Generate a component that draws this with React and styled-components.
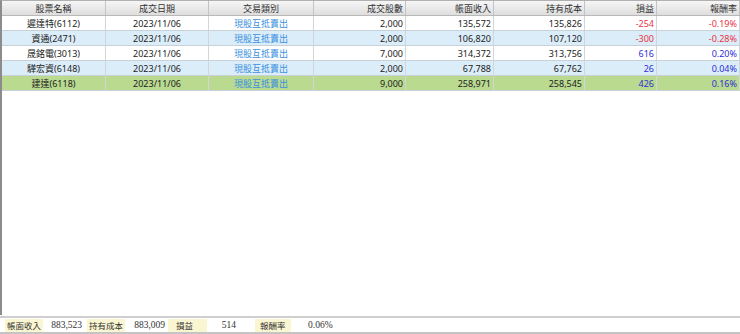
import React from "react";
import styled, { createGlobalStyle } from "styled-components";

const Global = createGlobalStyle`
  html, body { margin: 0; padding: 0; background: #fff; }
  body { width: 740px; height: 334px; overflow: hidden; }
`;

const cols = "104px 103px 105px 92px 88px 91px 72px 83px";

const Page = styled.div`
  width: 740px;
  height: 334px;
  display: flex;
  flex-direction: column;
  font-family: "Noto Sans", "Noto Sans CJK TC", sans-serif;
  font-size: 9px;
  color: #222;
`;

const Grid = styled.div`
  flex: 1;
  border-left: 2px solid #8c8c8c;
  border-top: 1px solid #b0b0b0;
  display: flex;
  flex-direction: column;
`;

const HeaderRow = styled.div`
  display: grid;
  grid-template-columns: ${cols};
  height: 14px;
  background: linear-gradient(#f6f6f6, #dedede);
  border-bottom: 1px solid #b8b8b8;
`;

const HeadCell = styled.div`
  display: flex;
  align-items: center;
  justify-content: ${(p) => (p.$right ? "flex-end" : "center")};
  padding: 0 2px;
  border-right: 1px solid #c4c4c4;
  color: #333;
  line-height: 1;
`;

const Row = styled.div`
  display: grid;
  grid-template-columns: ${cols};
  height: 14px;
  border-bottom: 1px solid #c8d0d8;
  background: ${(p) => (p.$sel ? "#b9da8f" : p.$alt ? "#dcedfa" : "#ffffff")};
`;

const Cell = styled.div`
  display: flex;
  align-items: center;
  justify-content: ${(p) => (p.$right ? "flex-end" : "center")};
  padding: 0 2px;
  border-right: 1px solid #d2d6da;
  color: ${(p) => p.$color || "#222"};
  line-height: 1;
  white-space: nowrap;
`;

const Footer = styled.div`
  height: 14px;
  margin-top: 1px;
  border-top: 2px solid #cfcfcf;
  border-bottom: 2px solid #c4c4c4;
  display: flex;
  align-items: center;
  padding-left: 5px;
  font-family: "Liberation Serif", "Noto Sans CJK TC", serif;
  font-size: 9.5px;
  color: #333;
  white-space: nowrap;
`;

const Label = styled.div`
  width: ${(p) => p.$w}px;
  height: 13px;
  margin-left: ${(p) => p.$ml || 0}px;
  background: #fbf6d2;
  display: flex;
  align-items: center;
  padding-left: ${(p) => p.$pl || 2}px;
  box-sizing: border-box;
  font-family: "Noto Sans CJK TC", sans-serif;
  font-size: 8.5px;
  white-space: nowrap;
`;

const Value = styled.div`
  width: ${(p) => p.$w}px;
  text-align: ${(p) => p.$align || "right"};
  padding-left: ${(p) => p.$pl || 0}px;
  box-sizing: border-box;
`;

const RED = "#e8333f";
const BLUE = "#2e2ed6";
const LINK = "#3a8fe0";

const rows = [
  ["遲達特(6112)", "2,000", "135,572", "135,826", "-254", "-0.19%", RED],
  ["資通(2471)", "2,000", "106,820", "107,120", "-300", "-0.28%", RED],
  ["晟銘電(3013)", "7,000", "314,372", "313,756", "616", "0.20%", BLUE],
  ["驊宏資(6148)", "2,000", "67,788", "67,762", "26", "0.04%", BLUE],
  ["建達(6118)", "9,000", "258,971", "258,545", "426", "0.16%", BLUE],
];

export default function App() {
  return (
    <Page>
      <Global />
      <Grid>
        <HeaderRow>
          <HeadCell>股票名稱</HeadCell>
          <HeadCell>成交日期</HeadCell>
          <HeadCell>交易類別</HeadCell>
          <HeadCell $right>成交股數</HeadCell>
          <HeadCell $right>帳面收入</HeadCell>
          <HeadCell $right>持有成本</HeadCell>
          <HeadCell $right>損益</HeadCell>
          <HeadCell $right>報酬率</HeadCell>
        </HeaderRow>
        {rows.map((r, i) => (
          <Row key={i} $alt={i % 2 === 1} $sel={i === 4}>
            <Cell>{r[0]}</Cell>
            <Cell>2023/11/06</Cell>
            <Cell $color={LINK}>現股互抵賣出</Cell>
            <Cell $right>{r[1]}</Cell>
            <Cell $right>{r[2]}</Cell>
            <Cell $right>{r[3]}</Cell>
            <Cell $right $color={r[6]}>{r[4]}</Cell>
            <Cell $right $color={r[6]}>{r[5]}</Cell>
          </Row>
        ))}
      </Grid>
      <Footer>
        <Label $w={38}>帳面收入</Label>
        <Value $w={39}>883,523</Value>
        <Label $w={38} $pl={2} $ml={5}>持有成本</Label>
        <Value $w={40}>883,009</Value>
        <Label $w={39} $pl={8} $ml={3}>損益</Label>
        <Value $w={29}>514</Value>
        <Label $w={36} $pl={5} $ml={19}>報酬率</Label>
        <Value $w={40} $align="left" $pl={17}>0.06%</Value>
      </Footer>
    </Page>
  );
}
